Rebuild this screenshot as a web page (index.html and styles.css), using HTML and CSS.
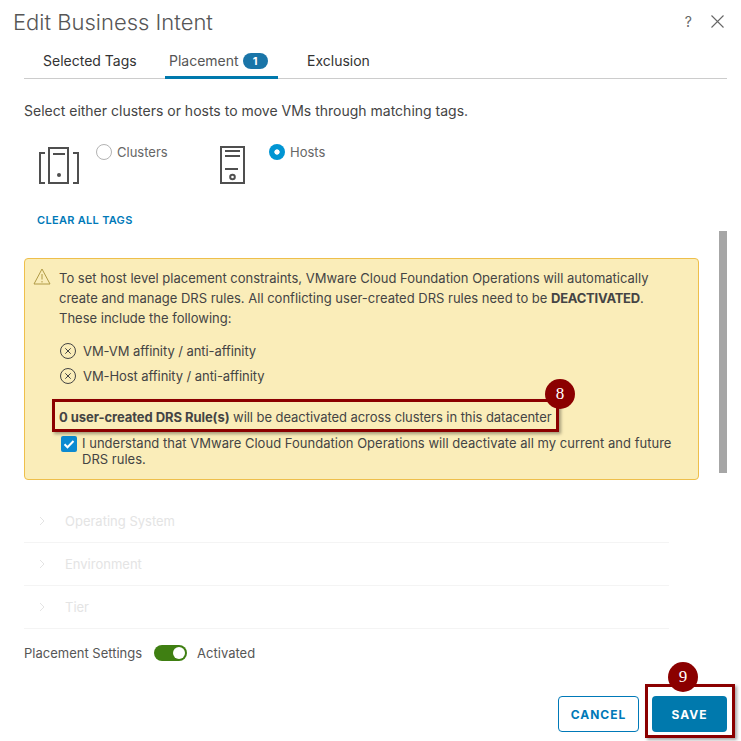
FILE: index.html
```html
<!DOCTYPE html>
<html lang="en">
<head>
<meta charset="utf-8">
<title>Edit Business Intent</title>
<link rel="stylesheet" href="styles.css">
</head>
<body>
<div class="dialog">
  <header class="head">
    <h1 class="title">Edit Business Intent</h1>
    <div class="head-actions">
      <span class="help">?</span>
      <svg class="close" width="13" height="13" viewBox="0 0 13 13"><path d="M.5.5l12 12M12.5.5l-12 12" fill="none" stroke="#666" stroke-width="1.1"/></svg>
    </div>
  </header>
  <nav class="tabs">
    <span class="tab tab-first">Selected Tags</span>
    <span class="tab tab-active">Placement <b class="count">1</b></span>
    <span class="tab tab-last">Exclusion</span>
  </nav>
  <p class="lead">Select either clusters or hosts to move VMs through matching tags.</p>
  <div class="choices">
    <div class="choice choice-clusters">
      <svg class="choice-icon" width="42" height="40" viewBox="0 0 42 40" fill="none" stroke="#4f4f4f" stroke-width="2"><path d="M7 7H2V37H7M35 7H40V37H35M11 2H30V37H11zM15 8H27"/><circle cx="21" cy="29" r="2" fill="#4f4f4f" stroke="none"/></svg>
      <span class="radio"></span><span class="radio-label">Clusters</span>
    </div>
    <div class="choice">
      <svg class="choice-icon" width="26" height="40" viewBox="0 0 26 40" fill="none" stroke="#4f4f4f" stroke-width="2"><path d="M2 1H25V37H2zM6 5H21M6 10H21M6 23H19"/><circle cx="13.500" cy="31" r="2.300"/></svg>
      <span class="radio radio-on"></span><span class="radio-label">Hosts</span>
    </div>
  </div>
  <a class="clear">CLEAR ALL TAGS</a>
  <div class="scroller">
    <div class="scroll-content">
      <section class="alert">
        <svg class="warn" width="18" height="17" viewBox="0 0 18 17" fill="none" stroke="#b09a45" stroke-width="1"><path d="M9 1L17 16H1zM9 6v5.500M9 13v1.500"/></svg>
        <p class="alert-text">To set host level placement constraints, VMware Cloud Foundation Operations will automatically create and manage DRS rules. All conflicting user-created DRS rules need to be <strong class="deact">DEACTIVATED</strong>. These include the following:</p>
        <ul class="rules">
          <li class="rule"><svg width="16" height="16" viewBox="0 0 16 16" fill="none" stroke="#444" stroke-width="1"><circle cx="8" cy="8" r="7.500"/><path d="M5.300 5.300l5.400 5.400M10.700 5.300l-5.400 5.400"/></svg>VM-VM affinity / anti-affinity</li>
          <li class="rule"><svg width="16" height="16" viewBox="0 0 16 16" fill="none" stroke="#444" stroke-width="1"><circle cx="8" cy="8" r="7.500"/><path d="M5.300 5.300l5.400 5.400M10.700 5.300l-5.400 5.400"/></svg>VM-Host affinity / anti-affinity</li>
        </ul>
        <p class="count-line"><strong>0 user-created DRS Rule(s)</strong> will be deactivated across clusters in this datacenter</p>
        <div class="check-row">
          <span class="check"><svg width="16" height="16" viewBox="0 0 16 16"><path d="M3.500 8.200l3 3 6-6.200" fill="none" stroke="#fff" stroke-width="2"/></svg></span>
          <p class="check-text">I understand that VMware Cloud Foundation Operations will deactivate all my current and future DRS rules.</p>
        </div>
      </section>
      <ul class="accordion">
        <li class="acc-row"><svg width="8" height="10" viewBox="0 0 8 10"><path d="M2 1l4 4-4 4" fill="none" stroke="#e4e4e4"/></svg>Operating System</li>
        <li class="acc-row"><svg width="8" height="10" viewBox="0 0 8 10"><path d="M2 1l4 4-4 4" fill="none" stroke="#e4e4e4"/></svg>Environment</li>
        <li class="acc-row"><svg width="8" height="10" viewBox="0 0 8 10"><path d="M2 1l4 4-4 4" fill="none" stroke="#e4e4e4"/></svg>Tier</li>
      </ul>
    </div>
    <div class="scrollbar"></div>
  </div>
  <div class="settings">
    <span>Placement Settings</span>
    <span class="switch"></span>
    <span>Activated</span>
  </div>
  <footer class="foot">
    <button class="btn btn-outline">CANCEL</button>
    <button class="btn btn-solid">SAVE</button>
  </footer>
</div>
<div class="mark mark-rule"></div>
<div class="pin pin-8">8</div>
<div class="mark mark-save"></div>
<div class="pin pin-9">9</div>
</body>
</html>
```
FILE: styles.css
```css
* { box-sizing: border-box; }
html, body { margin: 0; padding: 0; }
body { width: 741px; height: 741px; background: #fff; color: #565656; font-family: "Inter", "Open Sans", sans-serif; font-size: 13px; overflow: hidden; position: relative; }
p, ul, h1 { margin: 0; padding: 0; }
ul { list-style: none; }
.dialog { width: 741px; height: 741px; padding-left: 24px; padding-right: 14px; display: flex; flex-direction: column; }
.head { height: 43px; flex: none; margin-left: -11px; display: flex; justify-content: space-between; align-items: center; }
.title { font-size: 22px; font-weight: 300; color: #565656; }
.head-actions { display: flex; align-items: center; gap: 19px; margin-right: 3px; }
.help { font-size: 14px; color: #666; }
.tabs { height: 36px; flex: none; display: flex; border-bottom: 1px solid #ccc; font-size: 14px; color: #333; }
.tab { height: 36px; padding-top: 9px; }
.tab-first { margin-left: 19px; width: 122px; }
.tab-active { width: 113px; padding-left: 4px; border-bottom: 3px solid #0079ad; color: #565656; }
.tab-last { margin-left: 29px; }
.count { display: inline-block; width: 25px; height: 16px; border-radius: 8px; background: #1a75a8; color: #fff; font-size: 11px; line-height: 16px; text-align: center; vertical-align: 1px; }
.lead { margin-top: 23px; font-size: 14px; line-height: 18px; color: #444; flex: none; }
.choices { display: flex; margin-top: 23px; height: 43px; margin-left: 14px; flex: none; }
.choice { display: flex; align-items: flex-start; }
.choice-clusters { width: 181px; }
.choice-icon { margin-top: 3px; flex: none; }
.radio { width: 16px; height: 16px; border-radius: 50%; border: 1px solid #b3b3b3; margin: 1px 5px 0 16px; flex: none; background: #fff; }
.radio-on { border: none; background: radial-gradient(circle, #fff 2.3px, #0095d3 3px); margin-left: 24px; }
.radio-label { font-size: 13px; line-height: 18px; color: #666; }
.clear { display: block; margin: 27px 0 0 13px; font-size: 11px; line-height: 14px; font-weight: 600; color: #0079b8; letter-spacing: .3px; flex: none; }
.scroller { display: flex; align-items: flex-start; margin-top: 4px; flex: none; }
.scroll-content { width: 675px; flex: none; padding-top: 27px; }
.scrollbar { width: 8px; height: 242px; background: #a6a6a6; margin-left: 20px; flex: none; }
.alert { height: 222px; background: #faedb9; border: 1px solid #eebf4b; border-radius: 4px; padding: 9px 10px 0 34px; position: relative; color: #444; }
.warn { position: absolute; left: 8px; top: 9px; }
.alert-text { line-height: 20px; max-width: 600px; }
.deact { letter-spacing: -.25px; }
.rules { margin-top: 10px; }
.rule { height: 25px; display: flex; align-items: center; gap: 7px; letter-spacing: -.07px; }
.rule svg { margin-left: 1px; flex: none; }
.count-line { margin-top: 20px; line-height: 18px; letter-spacing: -.06px; }
.check-row { display: flex; margin-top: 9px; gap: 5px; }
.check { width: 16px; height: 16px; flex: none; border-radius: 2px; background: #0b8ad1; margin: 1px 0 0 2px; }
.check svg { display: block; }
.check-text { line-height: 16px; letter-spacing: .02px; }
.accordion { margin-top: 20px; width: 645px; color: #e4e4e4; }
.acc-row { height: 43px; border-bottom: 1px solid #f4f4f4; display: flex; align-items: center; gap: 19px; padding-left: 14px; }
.settings { margin-top: 14px; flex: none; height: 20px; display: flex; align-items: center; gap: 12px; }
.switch { width: 33px; height: 16px; margin-right: -2px; border-radius: 8px; background: #3f7f12; position: relative; }
.switch::after { content: ""; position: absolute; right: 2px; top: 2px; width: 12px; height: 12px; border-radius: 50%; background: #fff; }
.foot { display: flex; justify-content: flex-end; gap: 13px; margin-top: 33px; flex: none; }
.btn { height: 36px; border-radius: 4px; font: 700 12px "Inter", sans-serif; letter-spacing: 1px; padding: 0; }
.btn-outline { width: 81px; background: #fff; color: #0079b8; border: 1px solid #0079b8; }
.btn-solid { width: 75px; background: #0079ad; color: #fff; border: none; }
.mark { position: absolute; border: 3px solid #8b0000; box-shadow: 2px 2px 3px rgba(0,0,0,.35); }
.mark-rule { left: 52px; top: 399px; width: 507px; height: 33px; }
.mark-save { left: 645px; top: 684px; width: 90px; height: 54px; }
.pin { position: absolute; width: 30px; height: 30px; border-radius: 50%; background: #8b0000; color: #fff; font: 17px/30px "Liberation Serif", serif; text-align: center; }
.pin-8 { left: 545px; top: 379px; }
.pin-9 { left: 668px; top: 662px; }
```
